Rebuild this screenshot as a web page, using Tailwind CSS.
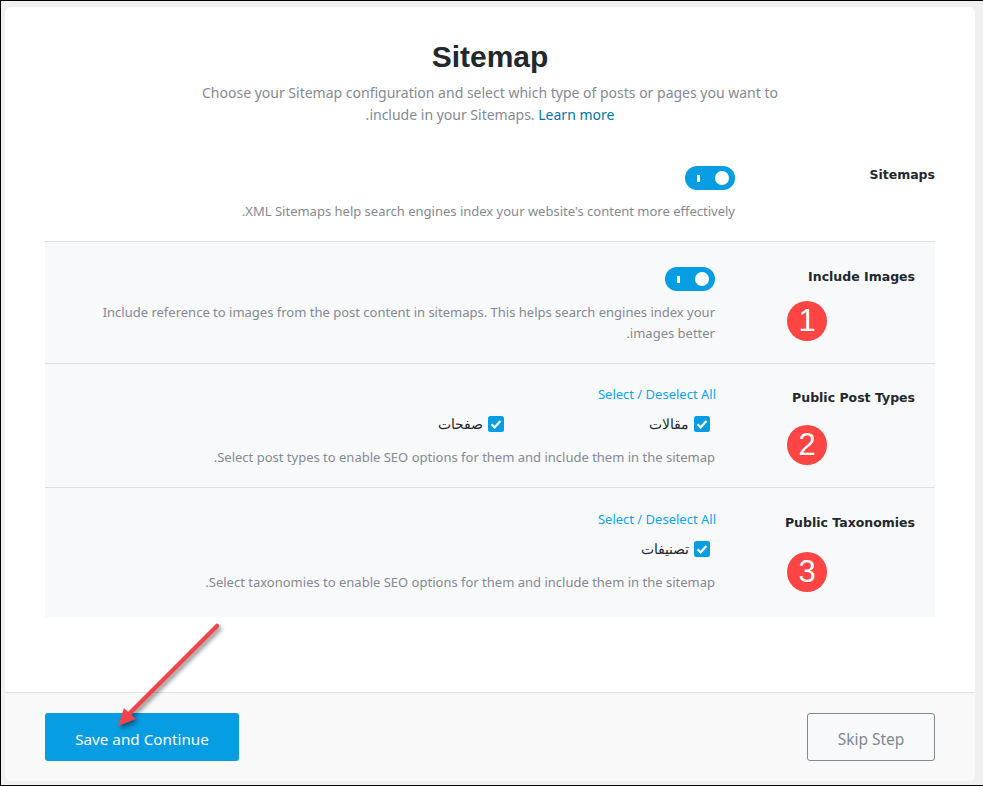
<!DOCTYPE html>
<html lang="en" dir="rtl">
<head>
<meta charset="utf-8">
<script src="https://cdn.jsdelivr.net/npm/@tailwindcss/browser@4"></script>
</head>
<body class="w-[983px] h-[786px] overflow-hidden bg-black font-['Noto_Sans','Noto_Sans_CJK_SC',sans-serif]">
<div class="relative mt-px h-[784px] w-[982px] bg-[#f0f0f1] pl-[4px] pt-[6px] pb-[4px] pr-[8px]">
  <main class="flex h-[774px] w-[970px] flex-col rounded-md bg-white">
    <header class="flex flex-col items-center pt-[31px]">
      <h1 class="font-['Liberation_Sans',sans-serif] text-[30px] leading-[38px] font-bold text-[#23282d]">Sitemap</h1>
      <p class="mt-[6px] w-[600px] text-center text-[14px] leading-[22px] text-[#858a94]">Choose your Sitemap configuration and select which type of posts or pages you want to include in your Sitemaps. <a class="text-[#0073aa]">Learn more</a>.</p>
    </header>
    <section class="mr-[40px] ml-[40px] mt-[40px] flex flex-1 flex-col">
      <div class="flex h-[76px] items-start border-b border-[#dddfe3]">
        <div class="w-[200px] shrink-0 pt-px"><h2 class="text-[12.5px] leading-4 font-bold text-[#23282d] font-['DejaVu_Sans']">Sitemaps</h2></div>
        <div class="flex flex-1 flex-col items-start">
          <span class="flex h-6 w-[50px] items-center justify-between rounded-full bg-[#069de3] pl-[4px] pr-[6px]" dir="ltr"><i class="ml-[8px] block h-[7px] w-[3px] bg-white"></i><i class="block h-[14px] w-[14px] rounded-full bg-white"></i></span>
          <p class="mt-[11px] text-[13px] leading-5 text-[#858a94]">XML Sitemaps help search engines index your website's content more effectively.</p>
        </div>
      </div>
      <div class="flex h-[122px] items-start border-b border-[#dddfe3] bg-[#f8f9fa] px-5 pt-[25px]">
        <div class="w-[200px] shrink-0 pt-[2px]"><h2 class="text-[12.5px] leading-4 font-bold text-[#23282d] font-['DejaVu_Sans']">Include Images</h2></div>
        <div class="flex flex-1 flex-col items-start">
          <span class="flex h-6 w-[50px] items-center justify-between rounded-full bg-[#069de3] pl-[4px] pr-[6px]" dir="ltr"><i class="ml-[8px] block h-[7px] w-[3px] bg-white"></i><i class="block h-[14px] w-[14px] rounded-full bg-white"></i></span>
          <p class="mt-[11px] text-[13px] leading-[21px] text-[#858a94]">Include reference to images from the post content in sitemaps. This helps search engines index your images better.</p>
        </div>
      </div>
      <div class="flex h-[124px] items-start border-b border-[#dddfe3] bg-[#f8f9fa] px-5 pt-[20px]">
        <div class="w-[200px] shrink-0 pt-[6px]"><h2 class="text-[12.5px] leading-4 font-bold text-[#23282d] font-['DejaVu_Sans']">Public Post Types</h2></div>
        <div class="flex flex-1 flex-col items-start">
          <a class="-mr-px text-[13px] leading-5 text-[#0ea5ec]">Select / Deselect All</a>
          <div class="mt-[11px] flex w-full items-center pr-[5px]">
            <label class="flex w-[206px] items-center gap-[5px] text-[13.5px] leading-4 text-[#23282d]"><svg class="h-4 w-4" viewBox="0 0 16 16"><rect width="16" height="16" rx="2.5" fill="#069de3"/><path d="M3.6 8.3l3 3 5.8-6.3" fill="none" stroke="#fff" stroke-width="2.2"/></svg><span class="pt-px">مقالات</span></label>
            <label class="flex items-center gap-[5px] text-[13.5px] leading-4 text-[#23282d]"><svg class="h-4 w-4" viewBox="0 0 16 16"><rect width="16" height="16" rx="2.5" fill="#069de3"/><path d="M3.6 8.3l3 3 5.8-6.3" fill="none" stroke="#fff" stroke-width="2.2"/></svg><span class="pt-px">صفحات</span></label>
          </div>
          <p class="mt-[15px] text-[13px] leading-5 text-[#858a94]">Select post types to enable SEO options for them and include them in the sitemap.</p>
        </div>
      </div>
      <div class="flex h-[129px] items-start bg-[#f8f9fa] px-5 pt-[21px]">
        <div class="w-[200px] shrink-0 pt-[6px]"><h2 class="text-[12.5px] leading-4 font-bold text-[#23282d] font-['DejaVu_Sans']">Public Taxonomies</h2></div>
        <div class="flex flex-1 flex-col items-start">
          <a class="-mr-px text-[13px] leading-5 text-[#0ea5ec]">Select / Deselect All</a>
          <div class="mt-[11px] flex w-full items-center pr-[5px]">
            <label class="flex items-center gap-[5px] text-[13.5px] leading-4 text-[#23282d]"><svg class="h-4 w-4" viewBox="0 0 16 16"><rect width="16" height="16" rx="2.5" fill="#069de3"/><path d="M3.6 8.3l3 3 5.8-6.3" fill="none" stroke="#fff" stroke-width="2.2"/></svg><span class="pt-px">تصنيفات</span></label>
          </div>
          <p class="mt-[15px] text-[13px] leading-5 text-[#858a94]">Select taxonomies to enable SEO options for them and include them in the sitemap.</p>
        </div>
      </div>
    </section>
    <footer class="mt-[75px] flex h-[90px] items-start justify-between rounded-b-md border-t border-[#dde1e6] bg-[#f9f9f9] px-10 pt-5">
      <a class="flex h-12 w-[128px] items-center justify-center rounded-[3px] border border-[#7e8993] bg-[#f8f9fa] pt-[5px] text-[15.5px] text-[#7e8993]">Skip Step</a>
      <a class="flex h-12 w-[194px] items-center justify-center rounded-[3px] bg-[#069de3] pt-[5px] text-[15.25px] text-white">Save and Continue</a>
    </footer>
  </main>
  <div dir="ltr" class="absolute left-[786px] top-[300px] flex h-10 w-10 items-center justify-center rounded-full bg-[#ff4444] font-['Liberation_Sans'] text-[31px] text-white">1</div>
  <div dir="ltr" class="absolute left-[786px] top-[424px] flex h-10 w-10 items-center justify-center rounded-full bg-[#ff4444] font-['Liberation_Sans'] text-[31px] text-white">2</div>
  <div dir="ltr" class="absolute left-[786px] top-[551px] flex h-10 w-10 items-center justify-center rounded-full bg-[#ff4444] font-['Liberation_Sans'] text-[31px] text-white">3</div>
  <svg class="absolute left-[101px] top-[610px] h-[130px] w-[130px] overflow-visible drop-shadow-[2px_3px_2px_rgba(0,0,0,0.45)]" viewBox="0 0 130 130">
    <path d="M115 15L28 102" stroke="#f4444b" stroke-width="4.5" stroke-linecap="round"/><path d="M16 115L22 97 34 108z" fill="#f4444b"/>
  </svg>
</div>
</body>
</html>
